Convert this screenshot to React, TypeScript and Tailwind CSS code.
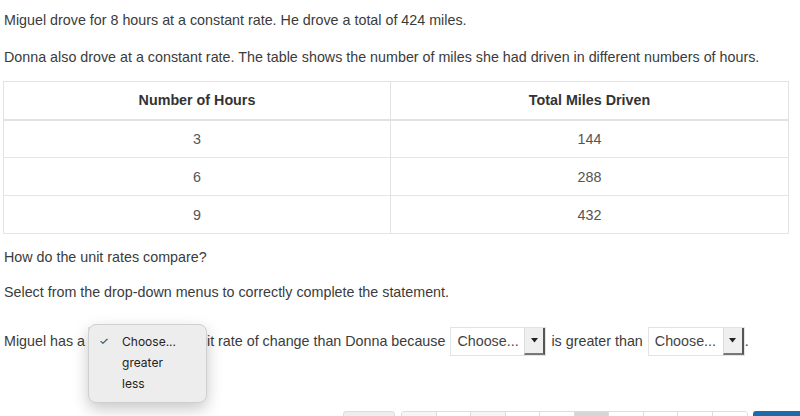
import React from 'react';

const rows = [
  { hours: '3', miles: '144' },
  { hours: '6', miles: '288' },
  { hours: '9', miles: '432' },
];

function Select({ width = 96, label = 'Choose...' }: { width?: number; label?: string }) {
  return (
    <span
      className="inline-flex h-[29px] items-stretch border border-[#e3e3e3] bg-white align-middle"
      style={{ width }}
    >
      <span className="flex flex-1 items-center pl-[6px] text-[#444]">{label}</span>
      <span className="flex w-[21px] items-center justify-center border-l border-[#ddd] border-r-2 border-r-[#555] border-b-2 border-b-[#777] bg-[#efefef]">
        <svg width="7" height="5" viewBox="0 0 7 5">
          <path d="M0 0 L7 0 L3.5 4.5 Z" fill="#222" />
        </svg>
      </span>
    </span>
  );
}

export default function App() {
  return (
    <div
      className="h-[416px] w-[800px] overflow-hidden bg-white text-[14.3px] leading-[20px] text-[#3b3b3b]"
      style={{ fontFamily: '"Liberation Sans", Arial, sans-serif' }}
    >
      <div className="pl-[4px] pt-[10px]">
        <p>Miguel drove for 8 hours at a constant rate. He drove a total of 424 miles.</p>
        <p className="mt-[17px]">
          Donna also drove at a constant rate. The table shows the number of miles she had driven in different numbers of hours.
        </p>

        {/* Table */}
        <table className="-ml-[1px] mt-[14px] w-[786px] border-collapse border border-[#e2e2e2]">
          <thead>
            <tr className="h-[38px] border-b-2 border-[#e2e2e2]">
              <th className="w-[387px] border-r border-[#e2e2e2] font-bold text-[#333]">Number of Hours</th>
              <th className="font-bold text-[#333]">Total Miles Driven</th>
            </tr>
          </thead>
          <tbody>
            {rows.map((r) => (
              <tr key={r.hours} className="h-[38px] border-b border-[#e6e6e6]">
                <td className="border-r border-[#e2e2e2] text-center text-[#555]">{r.hours}</td>
                <td className="text-center text-[#555]">{r.miles}</td>
              </tr>
            ))}
          </tbody>
        </table>

        <p className="mt-[13px]">How do the unit rates compare?</p>
        <p className="mt-[15px]">Select from the drop-down menus to correctly complete the statement.</p>

        {/* Statement */}
        <div className="mt-[24px] flex h-[30px] items-center whitespace-nowrap">
          <span>Miguel has a</span>
          <span className="relative ml-[3px]">
            <Select width={99} label="" />
            <div
              className="absolute -top-[3px] left-0 z-10 h-[79px] w-[119px] rounded-[8px] border border-[#cfcfcf] bg-[#ededed] pt-[6px] text-[12px] leading-[21px] text-[#222] shadow-[0_6px_16px_rgba(0,0,0,0.22)]"
              style={{ fontFamily: 'Inter, "Noto Sans", sans-serif' }}
            >
              <div className="flex items-center">
                <span className="w-[33px] pl-[10px] text-[11px] text-[#333]">✓</span>
                <span>Choose...</span>
              </div>
              <div className="pl-[33px]">greater</div>
              <div className="pl-[33px]">less</div>
            </div>
          </span>
          <span className="ml-[4px]">unit rate of change than Donna because</span>
          <span className="ml-[5px]">
            <Select />
          </span>
          <span className="ml-[5px]">is greater than</span>
          <span className="ml-[5px]">
            <Select width={97} />
          </span>
          <span>.</span>
        </div>

        {/* Pagination */}
        <div className="mt-[55px] flex h-[30px] items-start">
          <div className="ml-[339px] h-[30px] w-[52px] shrink-0 rounded-[3px] border border-[#ddd] bg-[#eeeeee]" />
          <div className="ml-[6px] flex h-[30px] shrink-0 overflow-hidden rounded-[3px] border border-[#ddd]">
            {Array.from({ length: 10 }).map((_, i) => (
              <div
                key={i}
                className={`h-full w-[34.5px] shrink-0 border-r border-[#ddd] last:border-r-0 ${
                  i === 5 ? 'bg-[#d6d6d6]' : i === 0 || i === 2 ? 'bg-[#f5f5f5]' : 'bg-white'
                }`}
              />
            ))}
          </div>
          <div className="ml-[5px] h-[30px] w-[60px] shrink-0 rounded-[3px] bg-[#1f6aa8]" />
        </div>
      </div>
    </div>
  );
}
